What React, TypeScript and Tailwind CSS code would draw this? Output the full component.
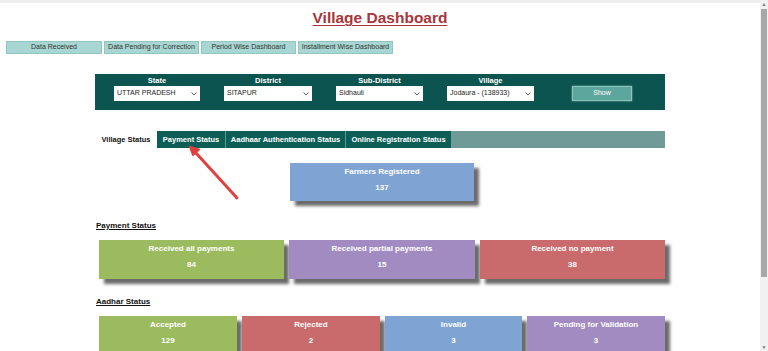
import React from "react";

const font = { fontFamily: '"Liberation Sans", Arial, sans-serif' };

function Card({ title, value, bg, w }: { title: string; value: string; bg: string; w: string }) {
  return (
    <div className={`${w} ${bg} h-[39px] flex flex-col items-center pt-[3px] text-white font-bold text-[8px] shadow-[5px_5px_3px_#6b6b6b]`}>
      <div className="leading-[11px]">{title}</div>
      <div className="leading-[11px] mt-[5px]">{value}</div>
    </div>
  );
}

function Select({ value, w }: { value: string; w: string }) {
  return (
    <div className={`${w} h-[15px] bg-white flex items-center justify-between px-[3px] text-[7px] text-[#222]`}>
      <span>{value}</span>
      <svg width="6" height="4" viewBox="0 0 6 4"><path d="M0.5 0.5 L3 3 L5.5 0.5" stroke="#555" strokeWidth="0.9" fill="none" /></svg>
    </div>
  );
}

export default function App() {
  return (
    <div style={font} className="w-[768px] h-[351px] overflow-hidden bg-white flex relative">
      <div className="flex-1 flex flex-col border-t-[3px] border-[#eeeeee] [&>*]:shrink-0">
        <div className="h-[28px] pt-[2px] flex items-center justify-center">
          <h1 className="text-[15.5px] leading-[18px] font-bold text-[#a8353a] underline decoration-1 underline-offset-2">Village Dashboard</h1>
        </div>
        <div className="flex gap-[2px] ml-[6px] mt-[10px]">
          {["Data Received", "Data Pending for Correction", "Period Wise Dashboard", "Installment Wise Dashboard"].map((t, i) => (
            <div key={t} className={`${i === 0 ? "w-[96px]" : "w-[95px]"} h-[13px] bg-[#a8d6d2] border border-[#93c6c1] text-[7px] text-[#333] flex items-center justify-center`}>{t}</div>
          ))}
        </div>
        <div className="ml-[95px] w-[570px] mt-[20px] h-[36px] bg-[#0c544f] flex items-start pl-[19px] pt-[2px]">
          {[
            { l: "State", v: "UTTAR PRADESH", w: "w-[86px]", ml: "" },
            { l: "District", v: "SITAPUR", w: "w-[88px]", ml: "ml-[24px]" },
            { l: "Sub-District", v: "Sidhauli", w: "w-[87px]", ml: "ml-[24px]" },
            { l: "Village", v: "Jodaura - (138933)", w: "w-[87px]", ml: "ml-[24px]" },
          ].map((f) => (
            <div key={f.l} className={`${f.ml} flex flex-col items-center`}>
              <div className="text-white font-bold text-[7.5px] leading-[10px]">{f.l}</div>
              <Select value={f.v} w={f.w} />
            </div>
          ))}
          <div className="ml-[38px] mt-[10px] w-[60px] h-[15px] bg-[#5da69d] border border-[#8fc3bd] shadow-[0_0_2px_#7aa] text-white text-[7px] flex items-center justify-center">Show</div>
        </div>
        <div className="ml-[95px] w-[570px] mt-[21px] h-[17px] flex text-[7.5px] font-bold">
          <div className="w-[62px] bg-white text-[#111] flex items-center justify-center">Village Status</div>
          <div className="w-[69px] bg-[#0e5e58] text-white flex items-center justify-center border-r border-[#5a9a95]">Payment Status</div>
          <div className="w-[120px] bg-[#0e5e58] text-white flex items-center justify-center border-r border-[#5a9a95]">Aadhaar Authentication Status</div>
          <div className="w-[105px] bg-[#0e5e58] text-white flex items-center justify-center">Online Registration Status</div>
          <div className="flex-1 bg-[#6f9a98]"></div>
        </div>
        <div className="ml-[95px] w-[570px] mt-[15px] flex justify-center">
          <div className="ml-[4px] w-[184px] h-[38px] bg-[#7fa3d2] flex flex-col items-center pt-[3px] text-white font-bold text-[8px] shadow-[5px_5px_3px_#6b6b6b]">
            <div className="leading-[11px]">Farmers Registered</div>
            <div className="leading-[11px] mt-[5px]">137</div>
          </div>
        </div>
        <div className="ml-[96px] mt-[20px] text-[8px] font-bold underline text-[#111] leading-[10px]">Payment Status</div>
        <div className="ml-[99px] mt-[9px] flex gap-[5px]">
          <Card title="Received all payments" value="84" bg="bg-[#9bbb5e]" w="w-[185px]" />
          <Card title="Received partial payments" value="15" bg="bg-[#a28bc1]" w="w-[186px]" />
          <Card title="Received no payment" value="38" bg="bg-[#c96b6c]" w="w-[185px]" />
        </div>
        <div className="ml-[96px] mt-[18px] text-[8px] font-bold underline text-[#111] leading-[10px]">Aadhar Status</div>
        <div className="ml-[99px] mt-[9px] flex gap-[5px]">
          <Card title="Accepted" value="129" bg="bg-[#9bbb5e]" w="w-[138px]" />
          <Card title="Rejected" value="2" bg="bg-[#c96b6c]" w="w-[138px]" />
          <Card title="Invalid" value="3" bg="bg-[#7fa3d2]" w="w-[137px]" />
          <Card title="Pending for Validation" value="3" bg="bg-[#a28bc1]" w="w-[138px]" />
        </div>
      </div>
      <div className="w-[8px] flex flex-col bg-[#f1f1f1]">
        <div className="h-[9px] flex items-center justify-center text-[5px] text-[#777]">▲</div>
        <div className="h-[268px] bg-[#a8a8a8] mx-[1px]"></div>
        <div className="flex-1"></div>
        <div className="h-[7px] flex items-center justify-center text-[5px] text-[#777]">▼</div>
      </div>
      <svg className="absolute left-0 top-0 pointer-events-none" width="768" height="351">
        <line x1="237" y1="198" x2="196" y2="153" stroke="#e0403f" strokeWidth="3" strokeLinecap="round" />
        <path d="M190 147 L199 149.5 L193 155 Z" fill="#e0403f" stroke="#e0403f" strokeWidth="2" strokeLinejoin="round" />
      </svg>
    </div>
  );
}
